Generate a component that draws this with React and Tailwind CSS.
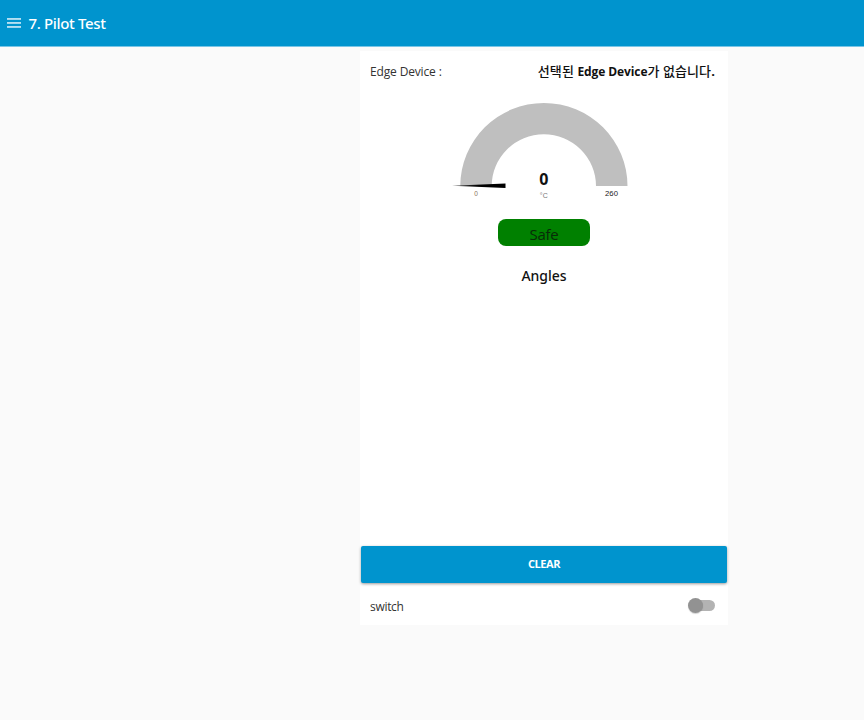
function Header() {
  return (
    <header className="flex h-[47px] items-center border-b border-[#79c5e6] bg-[#0094ce] pl-[7px] text-white">
      <svg width="14" height="10" viewBox="0 0 14 10" className="shrink-0" fill="#e2f3fb">
        <rect x="0" y="0.2" width="14" height="1.5" />
        <rect x="0" y="4.2" width="14" height="1.5" />
        <rect x="0" y="8.2" width="14" height="1.5" />
      </svg>
      <h1 className="ml-[7.5px] whitespace-nowrap font-['Noto_Sans','Open_Sans',sans-serif] text-[15px] font-medium leading-5 tracking-[-0.35px]">7. Pilot Test</h1>
    </header>
  );
}

function Gauge() {
  return (
    <svg width="368" height="110" viewBox="360 95 368 110" className="block">
      <defs>
        <linearGradient id="needle" x1="0" x2="1">
          <stop offset="0" stopColor="#555" />
          <stop offset="0.5" stopColor="#000" />
        </linearGradient>
      </defs>
      <path d="M460.3 186A83.6 83 0 0 1 627.5 186H596A52.15 51.7 0 0 0 491.7 186Z" fill="#bfbfbf" />
      <path d="M452 185.7L505.5 183.5V188Z" fill="url(#needle)" />
      <text x="543.8" y="185" textAnchor="middle" fontSize="16" fontWeight="700" fill="#111">0</text>
      <g fontFamily="Liberation Sans, sans-serif" textAnchor="middle">
        <text x="543.8" y="198.3" fontSize="7" fill="#777">°C</text>
        <text x="476" y="196" fontSize="6.5" fill="#86705c">0</text>
        <text x="611.5" y="196" fontSize="7.7" fill="#222">260</text>
      </g>
    </svg>
  );
}

function Switch() {
  return (
    <span role="switch" aria-checked="false" className="relative mt-0.5 block h-[11px] w-[26px] rounded-full bg-[#b3b3b3]">
      <span className="absolute left-[-1px] top-[-2px] size-[15.5px] rounded-full bg-[#929292] shadow-[0_1px_1px_rgba(0,0,0,0.18)]" />
    </span>
  );
}

export default function App() {
  return (
    <div className="h-[720px] w-[864px] overflow-hidden bg-[#fafafa] font-['Open_Sans','Noto_Sans_CJK_KR',sans-serif]">
      <Header />
      <main className="ml-[360px] mt-1 flex h-[574px] w-[368px] flex-col bg-white">
        <div className="flex h-[44px] items-center justify-between pl-[10px] pr-[13px] text-xs text-[#333]">
          <span className="-mt-0.5 whitespace-nowrap tracking-[-0.15px]">Edge Device :</span>
          <span className="-mt-1 flex items-baseline whitespace-pre leading-4 text-[#111]">
            <span className="text-[13px] font-medium tracking-[0.1px]">선택된 </span>
            <span className="font-bold tracking-[-0.1px]">Edge Device</span>
            <span className="text-[13px] font-medium tracking-[0.1px]">가 없습니다<b>.</b></span>
          </span>
        </div>
        <Gauge />
        <div className="mx-auto mt-[14px] flex h-[27px] w-[92px] items-center justify-center rounded-lg bg-[#008000] pt-[3px] text-[15px] leading-5 tracking-[-0.3px] text-[#082b08]">
          <span className="-mt-px">Safe</span>
        </div>
        <h2 className="mt-[20px] text-center font-['Noto_Sans','Open_Sans',sans-serif] text-sm leading-5 font-medium text-[#111]">Angles</h2>
        <button className="mx-px mt-auto flex h-[37px] shrink-0 items-center justify-center rounded-[2px] bg-[#0094ce] text-[11px] font-bold tracking-[-0.4px] text-white shadow-[0_1px_3px_rgba(0,0,0,0.4)]">
          CLEAR
        </button>
        <div className="flex h-[42px] shrink-0 items-center justify-between pl-[10px] pr-[13.5px]">
          <span className="mt-1.5 text-xs leading-4 tracking-[-0.3px] text-[#333]">switch</span>
          <Switch />
        </div>
      </main>
    </div>
  );
}
